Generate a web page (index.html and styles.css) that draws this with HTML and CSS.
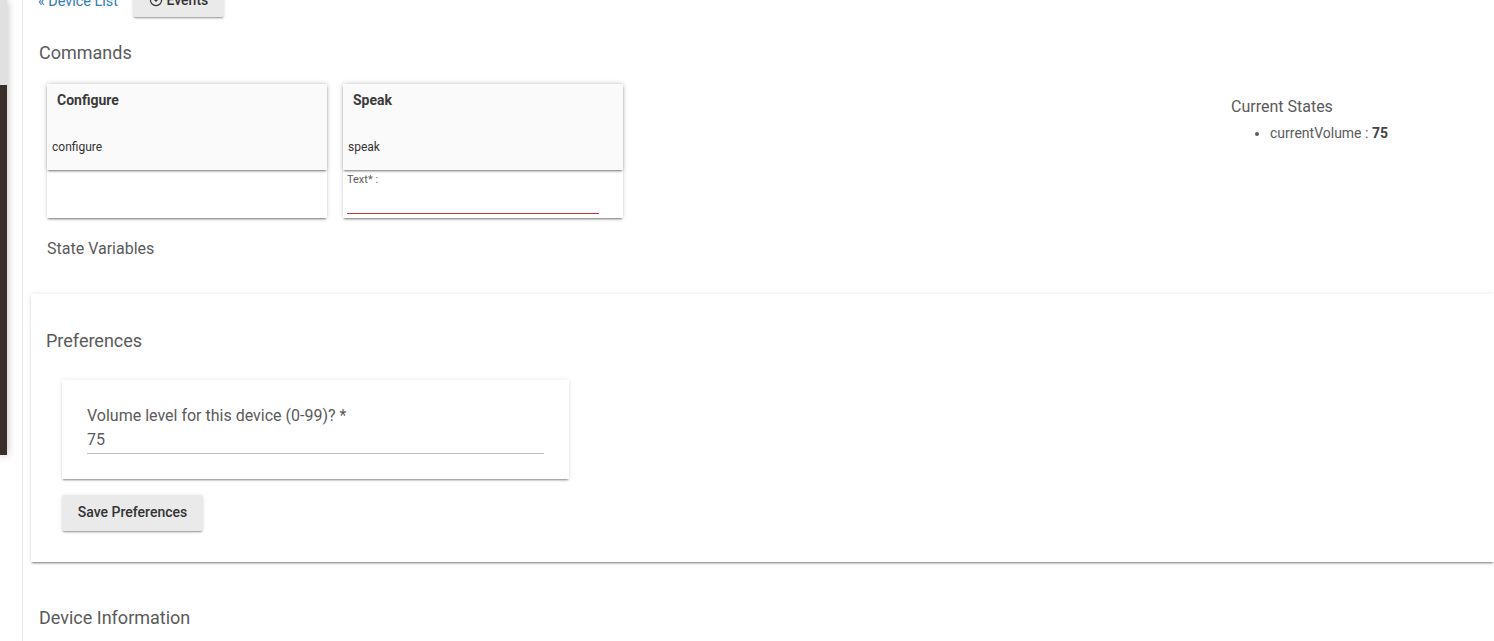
FILE: index.html
```html
<!DOCTYPE html>
<html lang="en">
<head>
<meta charset="utf-8">
<title>Device</title>
<link rel="stylesheet" href="styles.css">
</head>
<body>
<div class="shell">
  <aside class="sidebar">
    <div class="sidebar-top"></div>
    <div class="sidebar-dark"></div>
  </aside>
  <main class="main">
    <div class="toolbar">
      <a class="back-link" href="#">« Device List</a>
      <button class="btn btn-events" type="button">
        <svg class="events-icon" viewBox="0 0 14 14" width="14" height="14" aria-hidden="true"><circle cx="7" cy="7" r="5.6" fill="none" stroke="#333" stroke-width="1.2"/><path d="M7 3.6v4.2M5.2 6.4 7 8.2l1.8-1.8" fill="none" stroke="#333" stroke-width="1.1"/></svg>
        Events
      </button>
    </div>
    <h2 class="section-title commands-title">Commands</h2>
    <div class="commands-row">
      <div class="commands-col">
        <div class="command-cards">
          <section class="command">
            <div class="command-head">
              <div class="command-name">Configure</div>
              <div class="command-method">configure</div>
            </div>
            <div class="command-body"></div>
          </section>
          <section class="command">
            <div class="command-head">
              <div class="command-name">Speak</div>
              <div class="command-method">speak</div>
            </div>
            <div class="command-body">
              <label class="param-label" for="speak-text">Text* :</label>
              <input class="param-input" id="speak-text" type="text">
            </div>
          </section>
        </div>
        <h3 class="sub-title state-vars">State Variables</h3>
      </div>
      <div class="states">
        <h3 class="sub-title">Current States</h3>
        <ul class="states-list"><li>currentVolume : <b>75</b></li></ul>
      </div>
    </div>
    <section class="prefs">
      <h2 class="section-title prefs-title">Preferences</h2>
      <div class="pref-card">
        <label class="pref-label" for="vol">Volume level for this device (0-99)? *</label>
        <input class="pref-input" id="vol" type="text" value="75">
      </div>
      <button class="btn btn-save" type="button">Save Preferences</button>
    </section>
    <h2 class="section-title info-title">Device Information</h2>
  </main>
</div>
</body>
</html>
```
FILE: styles.css
```css
* { box-sizing: border-box; }
html, body { margin: 0; height: 641px; overflow: hidden; background: #fff; }
body { font-family: Roboto, "Liberation Sans", sans-serif; color: #4a4a4a; font-size: 14px; }

.shell { display: flex; height: 641px; overflow: hidden; }

.sidebar { flex: 0 0 7px; display: flex; flex-direction: column; height: 455px; box-shadow: 0 0 8px rgba(0,0,0,.3); }
.sidebar-top { height: 85px; background: #e0e0e0; }
.sidebar-dark { flex: 1; background: #3a2e2b; }

.main { flex: 1; min-width: 0; margin-left: 15px; border-left: 1px solid #e8e8e8; }

.toolbar { display: flex; align-items: flex-end; height: 24px; margin-top: -7px; padding-left: 15px; gap: 15px; }
.back-link { color: #337ab7; text-decoration: none; font-size: 14.4px; line-height: 20px; margin-bottom: 5px; }
.btn { border: 0; border-radius: 2px; background: #eaeaea; color: #333; font: 500 14px/20px Roboto, sans-serif; box-shadow: 0 2px 2px -1px rgba(0,0,0,.4), 0 0 4px rgba(0,0,0,.1); padding: 0; }
.btn-events { width: 91px; height: 36px; display: flex; align-items: center; justify-content: center; gap: 4px; padding-top: 2px; }
.events-icon { flex: none; }

.section-title { margin: 0; font-weight: 400; font-size: 18px; line-height: 24px; color: #5a5a5a; }
.commands-title { margin: 24px 0 0 16px; }

.commands-row { display: flex; justify-content: space-between; }
.commands-col { margin-left: 24px; padding-top: 19px; }
.command-cards { display: flex; gap: 16px; }
.command { width: 280px; height: 134px; display: flex; flex-direction: column; background: #fff; box-shadow: 0 2px 2px -1px rgba(0,0,0,.5), 0 0 5px rgba(0,0,0,.14); }
.command-head { height: 86px; padding: 8px 5px 0; background: #fafafa; box-shadow: 0 2px 2px -1px rgba(0,0,0,.5), 0 0 5px rgba(0,0,0,.12); position: relative; }
.command-name { font-weight: 700; font-size: 14px; line-height: 17px; padding-left: 5px; color: #3a3a3a; }
.command-method { margin-top: 30px; font-size: 12px; line-height: 16px; color: #333; }
.command-body { flex: 1; padding: 3px 4px 0; display: flex; flex-direction: column; }
.param-label { font-size: 11px; line-height: 13px; color: #5a5a5a; }
.param-input { width: 252px; height: 28px; border: 0; border-bottom: 1px solid #c5303c; padding: 0; outline: 0; background: transparent; }

.sub-title { margin: 0; font-weight: 400; font-size: 16px; line-height: 20px; color: #5a5a5a; }
.state-vars { margin-top: 21px; }

.states { width: 263px; padding-top: 32px; }
.states-list { margin: 6px 0 0; padding: 0 0 0 39px; font-size: 14px; line-height: 20px; color: #5a5a5a; }
.states-list b { color: #444; }

.prefs { margin: 35px 0 0 8px; height: 268px; padding: 35px 0 0 15px; background: #fff; box-shadow: 0 2px 2px -1px rgba(0,0,0,.5), 0 0 5px rgba(0,0,0,.1); }
.prefs-title { margin: 0; }
.pref-card { width: 507px; height: 99px; margin: 27px 0 0 16px; padding: 26px 25px 0; box-shadow: 0 2px 2px -1px rgba(0,0,0,.45), 0 0 5px rgba(0,0,0,.1); display: flex; flex-direction: column; }
.pref-label { font-size: 16px; line-height: 20px; color: #5a5a5a; }
.pref-input { height: 29px; border: 0; border-bottom: 1px solid #bdbdbd; padding: 0; font: 400 16px/20px Roboto, sans-serif; color: #5a5a5a; outline: 0; margin-top: -1px; background: transparent; }
.btn-save { display: block; width: 141px; height: 36px; margin: 16px 0 0 16px; padding-bottom: 2px; }

.info-title { margin: 44px 0 0 16px; }
```
